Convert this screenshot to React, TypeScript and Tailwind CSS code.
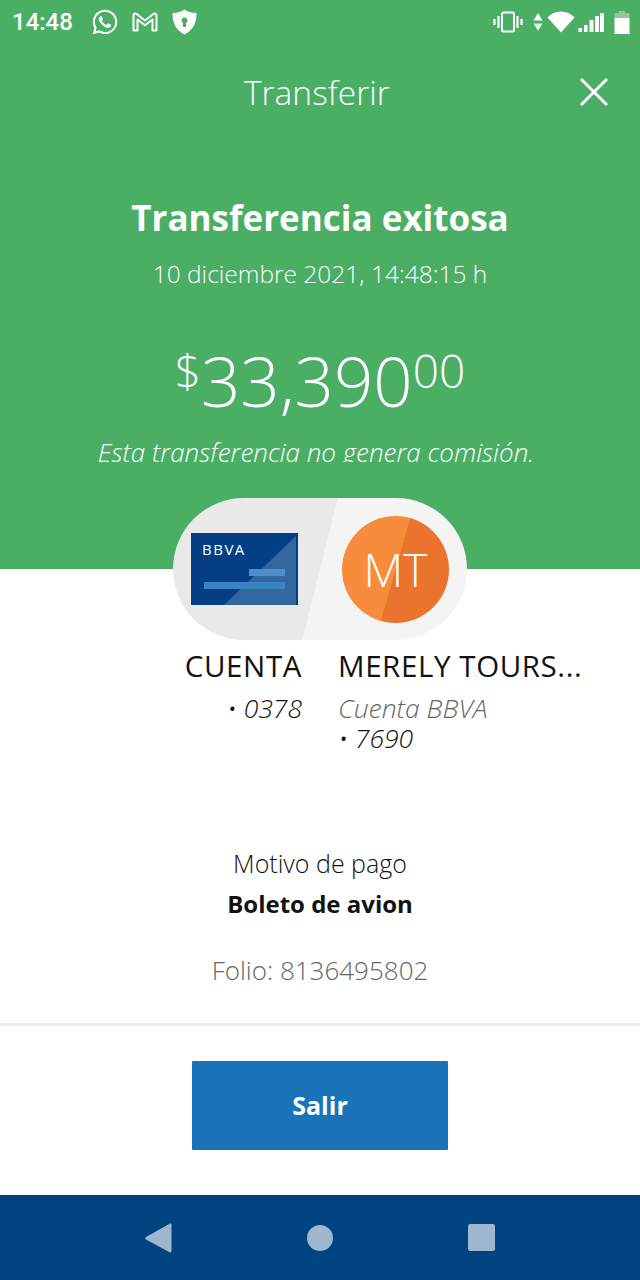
import { FaWhatsapp } from "react-icons/fa";

function GmailIcon() {
  return (
    <svg width="26" height="20" viewBox="0 0 26 20" fill="none" stroke="white" strokeWidth="2" strokeLinejoin="round">
      <path d="M1.500 3.500C1.500 1.800 3.300 1 4.600 2L13 8.500L21.400 2C22.700 1 24.500 1.800 24.500 3.500V18.500H20.500V7.500L13 13.200L5.500 7.500V18.500H1.500Z" />
    </svg>
  );
}

function ShieldIcon() {
  return (
    <svg width="25" height="26" viewBox="0 0 25 26">
      <path fill="white" fillRule="evenodd" d="M12.500 0.500C15.500 2.700 19 3.800 24.500 4C24.500 14 21 21.500 12.500 25.500C4 21.500 0.500 14 0.500 4C6 3.800 9.500 2.700 12.500 0.500ZM12.500 8.500A3 3 0 0 0 11 14.100V18H14V14.100A3 3 0 0 0 12.500 8.500Z" />
    </svg>
  );
}

function VibrateIcon() {
  return (
    <svg width="30" height="22" viewBox="0 0 30 22" fill="none" stroke="white">
      <rect x="9" y="1.500" width="12" height="19" rx="1.500" strokeWidth="2" />
      <path d="M5.500 5V17M24.500 5V17" strokeWidth="2.200" />
      <path d="M1.500 8V14M28.500 8V14" strokeWidth="2.200" />
    </svg>
  );
}

function SignalArrows() {
  return (
    <svg width="10" height="18" viewBox="0 0 10 18">
      <path fill="white" d="M5 0L9.500 7.500H0.500Z" />
      <path fill="white" d="M5 18L0.500 10.500H9.500Z" opacity="0.85" />
    </svg>
  );
}

function WifiIcon() {
  return (
    <svg width="28" height="22" viewBox="0 0 28 22">
      <path fill="white" d="M14 21.500L0.500 6.500C4 2.800 8.700 0.500 14 0.500C19.300 0.500 24 2.800 27.500 6.500Z" />
    </svg>
  );
}

function CellIcon() {
  return (
    <svg width="26" height="19" viewBox="0 0 26 19">
      <rect x="0.500" y="15" width="3.500" height="4" fill="white" />
      <rect x="6" y="12" width="3.500" height="7" fill="white" />
      <rect x="11.500" y="7" width="4" height="12" fill="white" />
      <rect x="17" y="3" width="4" height="16" fill="white" />
      <rect x="22" y="0" width="4" height="19" fill="white" />
    </svg>
  );
}

function BatteryIcon() {
  return (
    <svg width="16" height="23" viewBox="0 0 16 23">
      <path fill="white" fillOpacity="0.35" d="M5 0H11V2H15.500V8H0.500V2H5Z" />
      <rect x="0.500" y="7" width="15" height="16" rx="0.500" fill="white" />
    </svg>
  );
}

function CloseIcon() {
  return (
    <svg width="30" height="30" viewBox="0 0 30 30" fill="none" stroke="white" strokeWidth="3">
      <path d="M2 2L28 28M28 2L2 28" />
    </svg>
  );
}

function BankCard() {
  return (
    <div className="relative w-[107px] h-[72px] bg-[#043f86] overflow-hidden shrink-0">
      <svg className="absolute inset-0" width="107" height="72" viewBox="0 0 107 72">
        <path fill="#33679f" d="M33 72L105 3V72Z" />
        <rect x="58" y="36" width="36" height="7" fill="#4a8fca" />
        <rect x="13" y="49" width="81" height="7" fill="#3a83c3" />
      </svg>
      <span className="absolute left-[11px] top-[7px] text-white text-[15px] font-medium leading-[18px] tracking-[1.5px]">BBVA</span>
    </div>
  );
}

export default function App() {
  return (
    <div className="w-[640px] h-[1280px] flex flex-col bg-white font-['Open_Sans','Noto_Sans',sans-serif] overflow-hidden">
      <div className="h-[569px] bg-[#4aae65] flex flex-col items-center text-white shrink-0">
        <div className="w-full h-[44px] flex items-center justify-between pl-[12px] pr-[10px] shrink-0">
          <div className="flex items-center">
            <span className="font-['Roboto',sans-serif] font-medium text-[24px] leading-[44px] w-[79px]">14:48</span>
            <FaWhatsapp className="text-white w-[28px] h-[28px]" />
            <span className="ml-[13px] flex"><GmailIcon /></span>
            <span className="ml-[14px] flex"><ShieldIcon /></span>
          </div>
          <div className="flex items-center">
            <VibrateIcon />
            <span className="ml-[10px] flex"><SignalArrows /></span>
            <span className="ml-[4px] flex"><WifiIcon /></span>
            <span className="ml-[3px] flex"><CellIcon /></span>
            <span className="ml-[10px] flex"><BatteryIcon /></span>
          </div>
        </div>
        <div className="w-full h-[96px] flex items-center justify-between shrink-0 pl-[244px] pr-[31px]">
          <span className="text-[33.500px] font-light leading-[40px]">Transferir</span>
          <CloseIcon />
        </div>
        <h1 className="mt-[56px] text-[35px] font-bold leading-[44px]">Transferencia exitosa</h1>
        <p className="mt-[18px] text-[24.500px] font-light leading-[32px]">10 diciembre 2021, 14:48:15 h</p>
        <div className="mt-[50px] flex items-start font-light h-[76px]">
          <span className="text-[46px] leading-[60px]">$</span>
          <span className="text-[69px] leading-[80px]">33,390</span>
          <span className="text-[46px] leading-[60px]">00</span>
        </div>
        <div className="mt-[20px] h-[26px] overflow-hidden mr-[8px]">
          <p className="text-[26px] italic font-light leading-[32px]">Esta transferencia no genera comisión.</p>
        </div>
      </div>

      <div className="-mt-[71px] relative self-start ml-[173px] w-[294px] h-[142px] rounded-[71px] bg-[linear-gradient(104deg,#e9e9e9_50%,#f4f4f4_50%)] flex items-center shrink-0 pl-[18px] pr-[18px] justify-between">
        <BankCard />
        <div className="w-[107px] h-[107px] rounded-full bg-[linear-gradient(106deg,#f88c3d_50%,#ea732d_50%)] flex items-center justify-center text-white text-[46px] font-light">MT</div>
      </div>

      <div className="flex mt-[7px] h-[162px] text-[#121212] shrink-0">
        <div className="w-[302px] text-right">
          <div className="text-[29.500px] leading-[38px] font-medium tracking-[0.6px]">CUENTA</div>
          <div className="text-[26.500px] leading-[30px] italic font-light mt-[8px]">• 0378</div>
        </div>
        <div className="ml-[36px]">
          <div className="text-[29.500px] leading-[38px] font-medium tracking-[0.6px]">MERELY TOURS...</div>
          <div className="text-[26.500px] leading-[30px] italic font-light text-[#666666] mt-[8px]">Cuenta BBVA</div>
          <div className="text-[26.500px] leading-[30px] italic font-light">• 7690</div>
        </div>
      </div>

      <div className="flex flex-col items-center shrink-0">
        <p className="mt-[38px] text-[25px] font-light leading-[32px] text-[#121212]">Motivo de pago</p>
        <p className="mt-[9px] text-[24px] font-bold leading-[32px] text-[#121212]">Boleto de avion</p>
        <p className="mt-[34px] text-[26px] font-light leading-[32px] text-[#666666]">Folio: 8136495802</p>
      </div>

      <div className="mt-[37px] h-[3px] bg-[#ececec] shrink-0" />

      <div className="flex-1 flex items-center justify-center pb-[10px]">
        <button className="w-[256px] h-[89px] bg-[#1973b8] rounded-[1px] text-white font-bold text-[25px]">Salir</button>
      </div>

      <div className="h-[85px] bg-[#004481] flex items-center justify-center gap-[135px] shrink-0">
        <svg width="27" height="30" viewBox="0 0 27 30"><path fill="#9fb6cf" d="M25 0.500C26 0.500 26.500 1 26.500 2V28C26.500 29 25.500 30 24 29L1 16.500C0 15.800 0 14.800 1 14Z" /></svg>
        <div className="w-[26px] h-[26px] rounded-full bg-[#9fb6cf]" />
        <div className="w-[27px] h-[27px] rounded-[2px] bg-[#9fb6cf]" />
      </div>
    </div>
  );
}
